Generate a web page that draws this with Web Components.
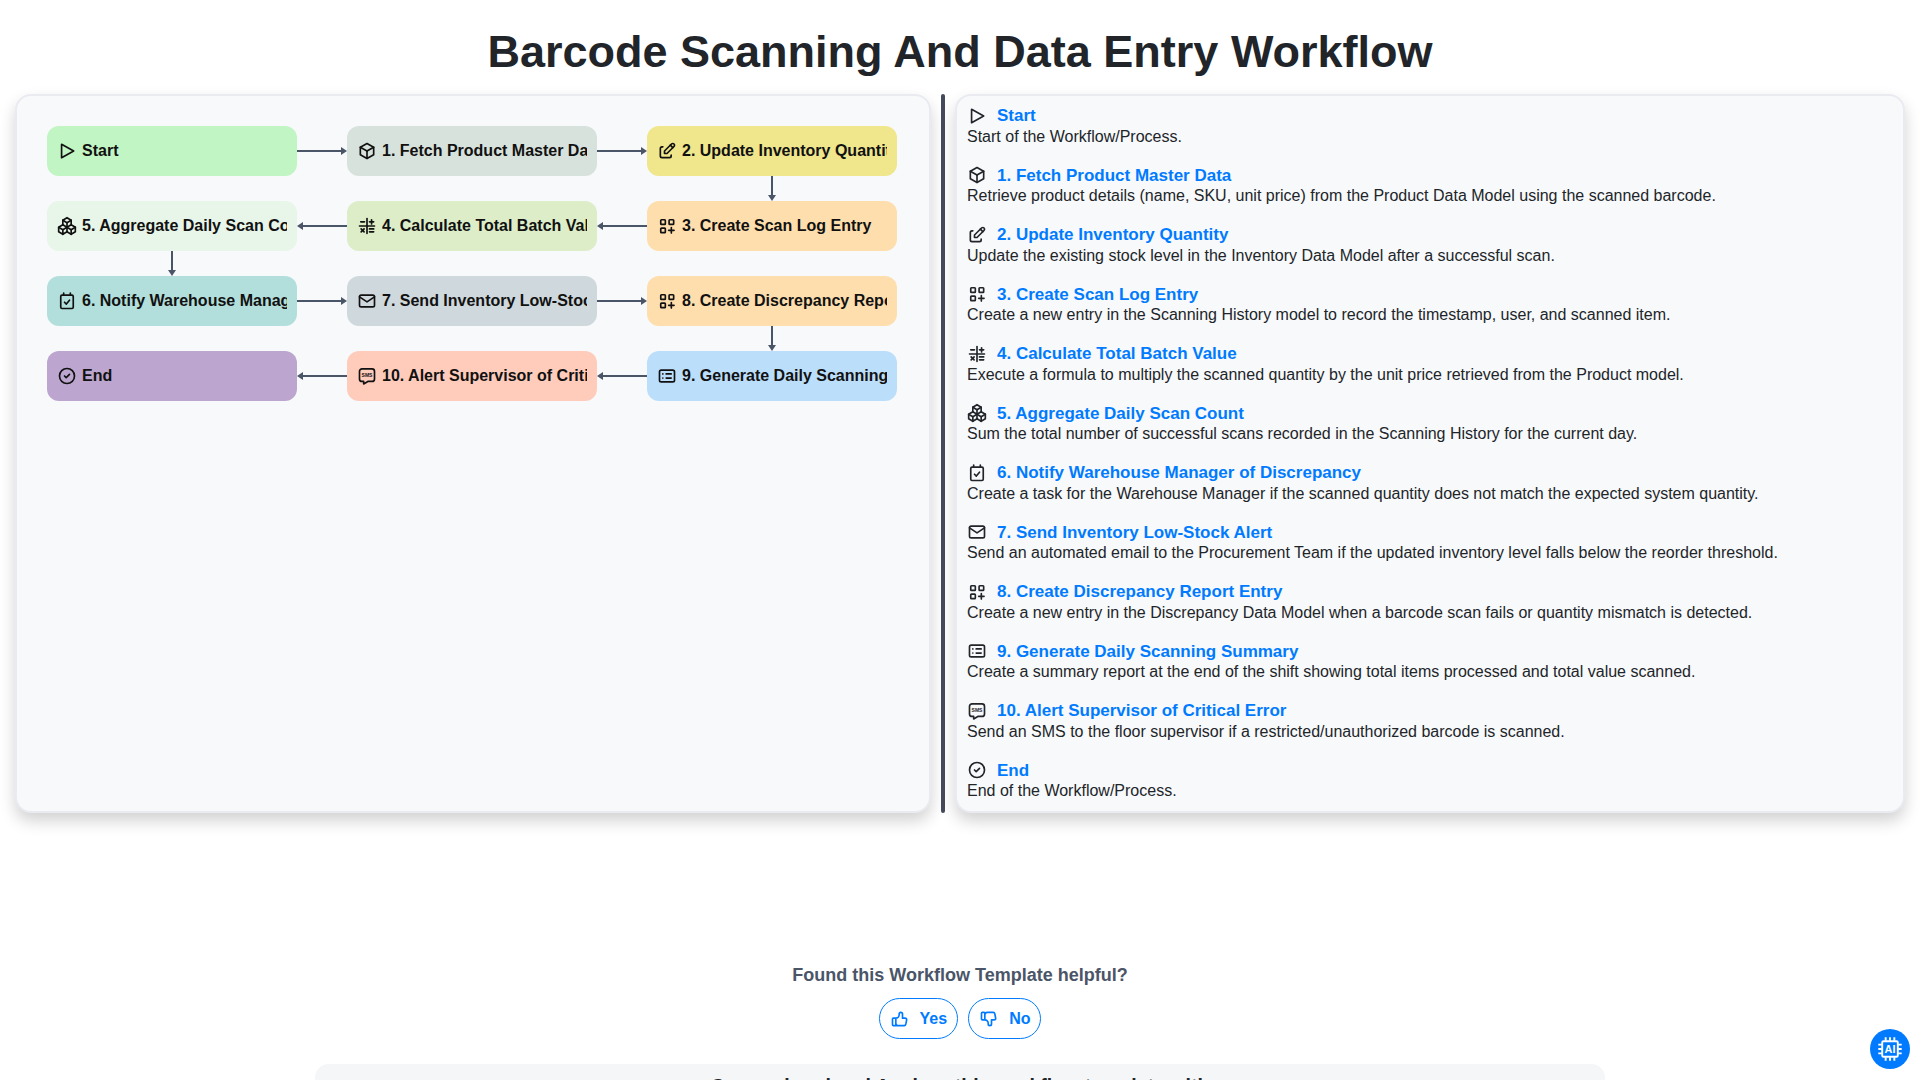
<!DOCTYPE html>
<html lang="en">
<head>
<meta charset="utf-8">
<title>Barcode Scanning And Data Entry Workflow</title>
<style>
    html, body {
        margin: 0;
        height: 1080px;
        overflow: hidden;
        background: #fff;
        color: #212529;
        font-family: "Liberation Sans", Arial, sans-serif;
    }
</style>
</head>
<body>
<workflow-page>
    <flow-diagram slot="diagram">
        <flow-node icon="play" style="--bg:#c1f5c3;grid-area:1/1">Start</flow-node>
        <flow-arrow dir="right" style="grid-area:1/2"></flow-arrow>
        <flow-node icon="box" style="--bg:#d8e2dc;grid-area:1/3">1. Fetch Product Master Data</flow-node>
        <flow-arrow dir="right" style="grid-area:1/4"></flow-arrow>
        <flow-node icon="edit" style="--bg:#f0e68c;grid-area:1/5">2. Update Inventory Quantity</flow-node>

        <flow-arrow dir="down" style="grid-area:2/5"></flow-arrow>

        <flow-node icon="packages" style="--bg:#e8f5e9;grid-area:3/1">5. Aggregate Daily Scan Count</flow-node>
        <flow-arrow dir="left" style="grid-area:3/2"></flow-arrow>
        <flow-node icon="math" style="--bg:#dcedc8;grid-area:3/3">4. Calculate Total Batch Value</flow-node>
        <flow-arrow dir="left" style="grid-area:3/4"></flow-arrow>
        <flow-node icon="grid" style="--bg:#ffdead;grid-area:3/5">3. Create Scan Log Entry</flow-node>

        <flow-arrow dir="down" style="grid-area:4/1"></flow-arrow>

        <flow-node icon="task" style="--bg:#b2dfdb;grid-area:5/1">6. Notify Warehouse Manager of Discrepancy</flow-node>
        <flow-arrow dir="right" style="grid-area:5/2"></flow-arrow>
        <flow-node icon="mail" style="--bg:#cfd8dc;grid-area:5/3">7. Send Inventory Low-Stock Alert</flow-node>
        <flow-arrow dir="right" style="grid-area:5/4"></flow-arrow>
        <flow-node icon="grid" style="--bg:#ffdead;grid-area:5/5">8. Create Discrepancy Report Entry</flow-node>

        <flow-arrow dir="down" style="grid-area:6/5"></flow-arrow>

        <flow-node icon="check" style="--bg:#bca6cf;grid-area:7/1">End</flow-node>
        <flow-arrow dir="left" style="grid-area:7/2"></flow-arrow>
        <flow-node icon="sms" style="--bg:#ffccbc;grid-area:7/3">10. Alert Supervisor of Critical Error</flow-node>
        <flow-arrow dir="left" style="grid-area:7/4"></flow-arrow>
        <flow-node icon="list" style="--bg:#bbdefb;grid-area:7/5">9. Generate Daily Scanning Summary</flow-node>
    </flow-diagram>

    <step-item slot="steps" icon="play" heading="Start">Start of the Workflow/Process.</step-item>
    <step-item slot="steps" icon="box" heading="1. Fetch Product Master Data">Retrieve product details (name, SKU, unit price) from the Product Data Model using the scanned barcode.</step-item>
    <step-item slot="steps" icon="edit" heading="2. Update Inventory Quantity">Update the existing stock level in the Inventory Data Model after a successful scan.</step-item>
    <step-item slot="steps" icon="grid" heading="3. Create Scan Log Entry">Create a new entry in the Scanning History model to record the timestamp, user, and scanned item.</step-item>
    <step-item slot="steps" icon="math" heading="4. Calculate Total Batch Value">Execute a formula to multiply the scanned quantity by the unit price retrieved from the Product model.</step-item>
    <step-item slot="steps" icon="packages" heading="5. Aggregate Daily Scan Count">Sum the total number of successful scans recorded in the Scanning History for the current day.</step-item>
    <step-item slot="steps" icon="task" heading="6. Notify Warehouse Manager of Discrepancy">Create a task for the Warehouse Manager if the scanned quantity does not match the expected system quantity.</step-item>
    <step-item slot="steps" icon="mail" heading="7. Send Inventory Low-Stock Alert">Send an automated email to the Procurement Team if the updated inventory level falls below the reorder threshold.</step-item>
    <step-item slot="steps" icon="grid" heading="8. Create Discrepancy Report Entry">Create a new entry in the Discrepancy Data Model when a barcode scan fails or quantity mismatch is detected.</step-item>
    <step-item slot="steps" icon="list" heading="9. Generate Daily Scanning Summary">Create a summary report at the end of the shift showing total items processed and total value scanned.</step-item>
    <step-item slot="steps" icon="sms" heading="10. Alert Supervisor of Critical Error">Send an SMS to the floor supervisor if a restricted/unauthorized barcode is scanned.</step-item>
    <step-item slot="steps" icon="check" heading="End">End of the Workflow/Process.</step-item>
</workflow-page>
<feedback-box></feedback-box>
<info-band>Comprehend and Analyze this workflow template with</info-band>
<ai-button></ai-button>

<script>
"use strict";

const ICONS = {
    play: `<path d="M5.5 4v16l14.5 -8z"/>`,
    box: `<path d="M12 3l8 4.5l0 9l-8 4.5l-8 -4.5l0 -9l8 -4.5"/><path d="M12 12l8 -4.5"/><path d="M12 12l0 9"/><path d="M12 12l-8 -4.5"/>`,
    edit: `<path d="M7 7h-1a2 2 0 0 0 -2 2v9a2 2 0 0 0 2 2h9a2 2 0 0 0 2 -2v-1"/><path d="M20.385 6.585a2.1 2.1 0 0 0 -2.97 -2.97l-8.415 8.385v3h3l8.385 -8.415z"/><path d="M16 5l3 3"/>`,
    grid: `<rect x="4.5" y="4.5" width="5.5" height="5.5" rx=".8"/><rect x="14.5" y="4.5" width="5.5" height="5.5" rx=".8"/><rect x="4.5" y="14.5" width="5.5" height="5.5" rx=".8"/><path d="M14 17.2h6.5"/><path d="M17.2 14v6.5"/>`,
    math: `<path d="M3 12h18"/><path d="M12 3v18"/><path d="M4.5 7h4.5"/><path d="M15 7h5"/><path d="M17.5 4.5v5"/><path d="M5 15.5l3.5 3.5"/><path d="M8.5 15.5l-3.5 3.5"/><path d="M15 15.5h5"/><path d="M15 19h5"/>`,
    packages: `<path d="M7 16.5l-5 -3l5 -3l5 3v5.5l-5 3z"/><path d="M2 13.5v5.5l5 3"/><path d="M7 16.545l5 -3.03"/><path d="M17 16.5l-5 -3l5 -3l5 3v5.5l-5 3z"/><path d="M12 19l5 3"/><path d="M17 16.5l5 -3"/><path d="M12 13.5v-5.5l-5 -3l5 -3l5 3v5.5"/><path d="M7 5.03v5.455"/><path d="M12 8l5 -3"/>`,
    task: `<path d="M4.5 6.5a1.5 1.5 0 0 1 1.5 -1.5h12a1.5 1.5 0 0 1 1.5 1.5v13a1.5 1.5 0 0 1 -1.5 1.5h-12a1.5 1.5 0 0 1 -1.5 -1.5z"/><path d="M8 2.5v2.5"/><path d="M16 2.5v2.5"/><path d="M9 13.5l2.2 2.2l3.8 -4.7"/>`,
    mail: `<path d="M3 7a2 2 0 0 1 2 -2h14a2 2 0 0 1 2 2v10a2 2 0 0 1 -2 2h-14a2 2 0 0 1 -2 -2v-10z"/><path d="M3 7l9 6l9 -6"/>`,
    list: `<path d="M3 7a2 2 0 0 1 2 -2h14a2 2 0 0 1 2 2v10a2 2 0 0 1 -2 2h-14a2 2 0 0 1 -2 -2z"/><path d="M7 9.5h.01"/><path d="M7 14.5h.01"/><path d="M11 9.5h6"/><path d="M11 14.5h6"/>`,
    sms: `<path d="M18 3.5a3 3 0 0 1 3 3v9a3 3 0 0 1 -3 3h-5l-5 3v-3h-2a3 3 0 0 1 -3 -3v-9a3 3 0 0 1 3 -3z"/><text x="12" y="13" text-anchor="middle" font-size="6" font-weight="700" stroke="none" fill="currentColor" font-family="Liberation Sans, sans-serif">SMS</text>`,
    check: `<path d="M3 12a9 9 0 1 0 18 0a9 9 0 1 0 -18 0"/><path d="M9 12l2 2l4 -4"/>`,
    "thumb-up": `<path d="M7 11v8a1 1 0 0 1 -1 1h-2a1 1 0 0 1 -1 -1v-7a1 1 0 0 1 1 -1h3a4 4 0 0 0 4 -4v-1a2 2 0 0 1 4 0v5h3a2 2 0 0 1 2 2l-1 5a2 3 0 0 1 -2 2h-7a3 3 0 0 1 -3 -3"/>`,
    "thumb-down": `<path d="M7 13v-8a1 1 0 0 0 -1 -1h-2a1 1 0 0 0 -1 1v7a1 1 0 0 0 1 1h3a4 4 0 0 1 4 4v1a2 2 0 0 0 4 0v-5h3a2 2 0 0 0 2 -2l-1 -5a2 3 0 0 0 -2 -2h-7a3 3 0 0 0 -3 3"/>`
};

class WfIcon extends HTMLElement {
    connectedCallback() {
        const root = this.shadowRoot || this.attachShadow({mode: "open"});
        root.innerHTML = `
            <style>
                :host { display: inline-flex; flex: none; width: 20px; height: 20px; }
                svg { width: 100%; height: 100%; display: block; }
            </style>
            <svg viewBox="0 0 24 24" fill="none" stroke="currentColor" stroke-width="2"
                stroke-linecap="round" stroke-linejoin="round">${ICONS[this.getAttribute("name")]}</svg>`;
    }
}

class FlowNode extends HTMLElement {
    constructor() {
        super();
        this.attachShadow({mode: "open"}).innerHTML = `
            <style>
                :host {
                    display: flex;
                    align-items: center;
                    gap: 5px;
                    box-sizing: border-box;
                    height: 50px;
                    min-width: 0;
                    padding: 0 10px;
                    border-radius: 12px;
                    background: var(--bg);
                    color: #111;
                    font-size: 16px;
                    font-weight: 700;
                }
                .label { flex: 1; min-width: 0; overflow: hidden; white-space: nowrap; }
            </style>
            <wf-icon name="${this.getAttribute("icon")}"></wf-icon>
            <span class="label"><slot></slot></span>`;
    }
}

class FlowArrow extends HTMLElement {
    constructor() {
        super();
        const shapes = {
            right: `<svg width="50" height="50"><path d="M0 25H45" /><polygon points="44,21 50,25 44,29"/></svg>`,
            left: `<svg width="50" height="50"><path d="M50 25H5" /><polygon points="6,21 0,25 6,29"/></svg>`,
            down: `<svg width="50" height="25"><path d="M25 0V20" /><polygon points="21,19 25,25 29,19"/></svg>`
        };
        this.attachShadow({mode: "open"}).innerHTML = `
            <style>
                :host { display: flex; justify-content: center; align-items: center; }
                svg { display: block; }
                path { stroke: #4a5568; stroke-width: 2; fill: none; }
                polygon { fill: #4a5568; }
            </style>
            ${shapes[this.getAttribute("dir")]}`;
    }
}

class FlowDiagram extends HTMLElement {
    constructor() {
        super();
        this.attachShadow({mode: "open"}).innerHTML = `
            <style>
                :host {
                    display: grid;
                    grid-template-columns: 250px 50px 250px 50px 250px;
                    grid-template-rows: 50px 25px 50px 25px 50px 25px 50px;
                }
            </style>
            <slot></slot>`;
    }
}

class StepItem extends HTMLElement {
    constructor() {
        super();
        this.attachShadow({mode: "open"}).innerHTML = `
            <style>
                :host { display: block; margin-bottom: 18.3px; }
                :host(:last-child) { margin-bottom: 0; }
                .head { display: flex; align-items: center; gap: 10px; height: 21.12px; color: #212529; }
                .head span { color: #007bff; font-size: 17px; font-weight: 700; line-height: 21.12px; }
                .desc { margin-top: 1.7px; font-size: 16px; line-height: 18.4px; color: #212529; }
            </style>
            <div class="head">
                <wf-icon name="${this.getAttribute("icon")}"></wf-icon>
                <span>${this.getAttribute("heading")}</span>
            </div>
            <div class="desc"><slot></slot></div>`;
    }
}

class WorkflowPage extends HTMLElement {
    constructor() {
        super();
        this.attachShadow({mode: "open"}).innerHTML = `
            <style>
                :host { display: block; }
                h1 {
                    margin: 0;
                    height: 94px;
                    padding-top: 25px;
                    box-sizing: border-box;
                    text-align: center;
                    font-size: 45px;
                    line-height: 54px;
                    font-weight: 700;
                    color: #212529;
                }
                .panels { display: flex; gap: 10px; padding: 0 15px; }
                .card {
                    box-sizing: border-box;
                    height: 719px;
                    border: 2px solid #e9ebf0;
                    border-radius: 16px;
                    background: #f8f9fb;
                    box-shadow: 0 8px 16px rgba(0, 0, 0, .18);
                }
                .left { width: 916px; padding: 30px; }
                .right { flex: 1; padding: 9.2px 10px; }
                .divider { width: 4px; height: 719px; border-radius: 2px; background: #454b5c; }
            </style>
            <h1>Barcode Scanning And Data Entry Workflow</h1>
            <div class="panels">
                <div class="card left"><slot name="diagram"></slot></div>
                <div class="divider"></div>
                <div class="card right"><slot name="steps"></slot></div>
            </div>`;
    }
}

class FeedbackBox extends HTMLElement {
    constructor() {
        super();
        this.attachShadow({mode: "open"}).innerHTML = `
            <style>
                :host {
                    display: flex;
                    flex-direction: column;
                    align-items: center;
                    padding-top: 151px;
                    font-weight: 700;
                }
                .ask { font-size: 18px; line-height: 22px; color: #4a5568; }
                .buttons { display: flex; gap: 10px; margin-top: 12px; }
                button {
                    display: flex;
                    align-items: center;
                    gap: 10px;
                    height: 41px;
                    padding: 0 10px;
                    border: 1px solid #007bff;
                    border-radius: 21px;
                    background: #fff;
                    color: #007bff;
                    font: inherit;
                    font-size: 16px;
                }
            </style>
            <div class="ask">Found this Workflow Template helpful?</div>
            <div class="buttons">
                <button><wf-icon name="thumb-up"></wf-icon>Yes</button>
                <button><wf-icon name="thumb-down"></wf-icon>No</button>
            </div>`;
    }
}

class InfoBand extends HTMLElement {
    constructor() {
        super();
        this.attachShadow({mode: "open"}).innerHTML = `
            <style>
                :host {
                    display: block;
                    box-sizing: border-box;
                    width: 1290px;
                    height: 120px;
                    margin: 25px auto 0;
                    padding-top: 10px;
                    border-radius: 14px;
                    background: #f5f6f8;
                    text-align: center;
                    font-size: 19.5px;
                    line-height: 24px;
                    font-weight: 700;
                    color: #212529;
                }
            </style>
            <slot></slot>`;
    }
}

class AiButton extends HTMLElement {
    constructor() {
        super();
        this.attachShadow({mode: "open"}).innerHTML = `
            <style>
                :host {
                    position: fixed;
                    right: 10px;
                    bottom: 11px;
                    display: flex;
                    align-items: center;
                    justify-content: center;
                    width: 40px;
                    height: 40px;
                    border-radius: 50%;
                    background: #007bff;
                }
            </style>
            <svg width="26" height="26" viewBox="0 0 30 30" fill="none" stroke="#fff" stroke-width="2.2">
                <rect x="6" y="6" width="18" height="18" rx="1.5"/>
                <path d="M10 1.5v4M15 1.5v4M20 1.5v4M10 24.5v4M15 24.5v4M20 24.5v4M1.5 10h4M1.5 15h4M1.5 20h4M24.5 10h4M24.5 15h4M24.5 20h4"/>
                <text x="15" y="19.5" text-anchor="middle" font-size="12.5" font-weight="700" fill="#fff" stroke="none" font-family="Liberation Sans, sans-serif">AI</text>
            </svg>`;
    }
}

customElements.define("wf-icon", WfIcon);
customElements.define("flow-node", FlowNode);
customElements.define("flow-arrow", FlowArrow);
customElements.define("flow-diagram", FlowDiagram);
customElements.define("step-item", StepItem);
customElements.define("workflow-page", WorkflowPage);
customElements.define("feedback-box", FeedbackBox);
customElements.define("info-band", InfoBand);
customElements.define("ai-button", AiButton);
</script>
</body>
</html>
